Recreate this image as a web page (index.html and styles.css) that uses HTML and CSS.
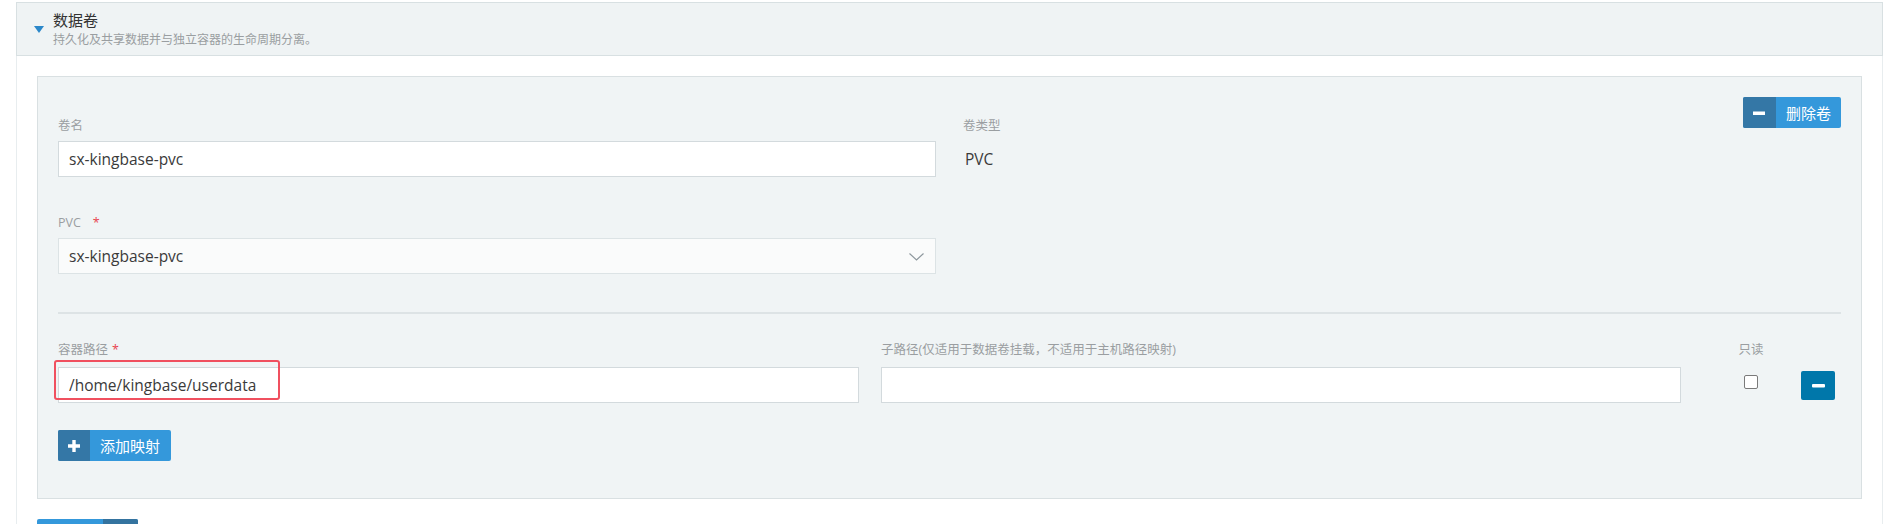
FILE: index.html
```html
<!DOCTYPE html>
<html lang="zh-CN">
<head>
    <meta charset="UTF-8">
    <title>数据卷</title>
    <link rel="stylesheet" href="styles.css">
</head>
<body>

<div class="section">
    <div class="section-head">
        <span class="caret"></span>
        <div class="head-text">
            <div class="head-title">数据卷</div>
            <div class="head-desc">持久化及共享数据并与独立容器的生命周期分离。</div>
        </div>
    </div>

    <div class="section-body">
        <div class="volume">
            <div class="volume-top">
                <div class="fields">
                    <div class="field">
                        <label class="field-label">卷名</label>
                        <input class="text-input" type="text" value="sx-kingbase-pvc">
                    </div>
                    <div class="field field-next">
                        <label class="field-label">PVC<span class="req req-wide">*</span></label>
                        <div class="select">
                            <span>sx-kingbase-pvc</span>
                            <svg class="chevron" width="15" height="8" viewBox="0 0 15 8">
                                <path d="M0.5 0.5 L7.5 7 L14.5 0.5" fill="none" stroke="#8d979d" stroke-width="1.2"/>
                            </svg>
                        </div>
                    </div>
                </div>
                <div class="fields">
                    <div class="field">
                        <label class="field-label">卷类型</label>
                        <div class="field-value">PVC</div>
                    </div>
                </div>
                <button class="btn">
                    <span class="btn-icon">
                        <svg width="12" height="12" viewBox="0 0 12 12"><rect x="0" y="4.5" width="12" height="3.5" fill="#fff"/></svg>
                    </span>
                    <span class="btn-text">删除卷</span>
                </button>
            </div>

            <div class="divider"></div>

            <div class="mount-row">
                <div class="field">
                    <label class="field-label">容器路径<span class="req">*</span></label>
                    <div class="mark-wrap">
                        <input class="text-input" type="text" value="/home/kingbase/userdata">
                        <span class="mark"></span>
                    </div>
                </div>
                <div class="field">
                    <label class="field-label">子路径(仅适用于数据卷挂载，不适用于主机路径映射)</label>
                    <input class="text-input" type="text" value="">
                </div>
                <div class="field field-check">
                    <label class="field-label">只读</label>
                    <div class="check-cell"><input class="check" type="checkbox"></div>
                </div>
                <div class="field">
                    <label class="field-label">&nbsp;</label>
                    <div class="check-cell">
                        <button class="btn-remove">
                            <svg width="13" height="4" viewBox="0 0 13 4"><rect x="0" y="0" width="13" height="3.5" rx="1" fill="#fff"/></svg>
                        </button>
                    </div>
                </div>
            </div>

            <button class="btn btn-add">
                <span class="btn-icon">
                    <svg width="12" height="12" viewBox="0 0 12 12"><path d="M4.3 0h3.4v4.3H12v3.4H7.7V12H4.3V7.7H0V4.3h4.3z" fill="#fff"/></svg>
                </span>
                <span class="btn-text">添加映射</span>
            </button>
        </div>

        <!-- next button is cut by the window bottom, only its top edge shows -->
        <button class="btn btn-more">
            <span class="btn-text btn-text-wide"></span>
            <span class="btn-icon btn-icon-wide"></span>
        </button>
    </div>
</div>

</body>
</html>
```

FILE: styles.css
```css
body {
    margin: 0;
    font-family: "Open Sans", "Noto Sans CJK SC", sans-serif;
    color: #333;
    background: #fff;
}

.section {
    margin: 2px 0 0 16px;
    width: 1867px;
}

.section-head {
    display: flex;
    align-items: center;
    height: 52px;
    padding: 0 16px;
    background: #eff3f4;
    border: 1px solid #d8e0e2;
}

.caret {
    width: 0;
    height: 0;
    margin: 1px 9px 0 1px;
    border-left: 5px solid transparent;
    border-right: 5px solid transparent;
    border-top: 7px solid #2b87c9;
}

.head-title {
    font-size: 15px;
    line-height: 20px;
    color: #333;
}

.head-desc {
    font-size: 12px;
    line-height: 18px;
    color: #9a9ea1;
    margin-top: 1px;
}

.section-body {
    padding: 20px 20px 0;
    border-left: 1px solid #e8edef;
    border-right: 1px solid #e8edef;
    min-height: 500px;
}

.volume {
    background: #f0f4f5;
    border: 1px solid #d9e0e2;
    padding: 20px 20px 37px;
}

.volume-top {
    display: grid;
    grid-template-columns: 878px 1fr auto;
    column-gap: 27px;
    align-items: start;
}

.fields {
    padding-top: 20px;
}

.field {
    display: flex;
    flex-direction: column;
}

.field-next {
    margin-top: 37px;
}

.field-label {
    font-size: 12.5px;
    line-height: 17px;
    height: 17px;
    color: #9a9ea1;
    margin-bottom: 7px;
    white-space: nowrap;
}

.req {
    color: #e8434f;
    margin-left: 4px;
}

.req-wide {
    margin-left: 12px;
}

.text-input {
    box-sizing: border-box;
    width: 100%;
    height: 36px;
    margin: 0;
    padding: 0 10px;
    border: 1px solid #d3dadd;
    border-radius: 0;
    background: #fff;
    font-family: "Open Sans", "Noto Sans CJK SC", sans-serif;
    font-size: 15.5px;
    color: #3a3a3a;
    outline: none;
}

.select {
    box-sizing: border-box;
    display: flex;
    align-items: center;
    justify-content: space-between;
    height: 36px;
    padding: 0 11px 0 10px;
    border: 1px solid #dce3e5;
    background: #fafbfb;
    font-size: 15.5px;
    color: #3a3a3a;
}

.chevron {
    display: block;
    margin-top: 1px;
}

.field-value {
    font-size: 15.5px;
    line-height: 36px;
    color: #3a3a3a;
    padding-left: 2px;
}

.btn {
    display: inline-flex;
    align-items: stretch;
    height: 31px;
    padding: 0;
    border: 0;
    border-radius: 2px;
    overflow: hidden;
    background: #3498db;
    font-family: "Open Sans", "Noto Sans CJK SC", sans-serif;
    cursor: pointer;
}

.btn-icon {
    display: flex;
    align-items: center;
    justify-content: center;
    width: 33px;
    background: #3477a6;
}

.btn-text {
    display: flex;
    align-items: center;
    padding: 0 10px;
    font-size: 15px;
    color: #fff;
}

.divider {
    height: 2px;
    background: #dde3e5;
    margin-top: 38px;
}

.mount-row {
    display: grid;
    grid-template-columns: 801px 800px 76px 34px;
    column-gap: 22px;
    margin-top: 27px;
}

.mount-row .field-label {
    margin-bottom: 9px;
}

.field-check {
    padding-left: 20px;
    align-items: center;
}

.check-cell {
    height: 36px;
}

.check {
    appearance: none;
    display: block;
    box-sizing: border-box;
    width: 14px;
    height: 14px;
    margin: 8px 0 0;
    border: 1px solid #7a7a7a;
    border-radius: 2px;
    background: #fff;
}

.btn-remove {
    display: flex;
    align-items: center;
    justify-content: center;
    width: 34px;
    height: 29px;
    margin-top: 4px;
    padding: 0;
    border: 0;
    border-radius: 2px;
    background: #0077aa;
    cursor: pointer;
}

.mark-wrap {
    position: relative;
}

.mark {
    position: absolute;
    left: -4px;
    top: -7px;
    width: 226px;
    height: 40px;
    box-sizing: border-box;
    border: 2px solid #f0505f;
    border-radius: 3px;
}

.btn-add {
    margin-top: 27px;
}

.btn-add .btn-icon {
    width: 32px;
}

.btn-add .btn-text {
    padding: 0 11px 0 10px;
}

.btn-more {
    margin-top: 20px;
}

.btn-text-wide {
    width: 66px;
    padding: 0;
}

.btn-icon-wide {
    width: 35px;
    background: #34739f;
}
```
